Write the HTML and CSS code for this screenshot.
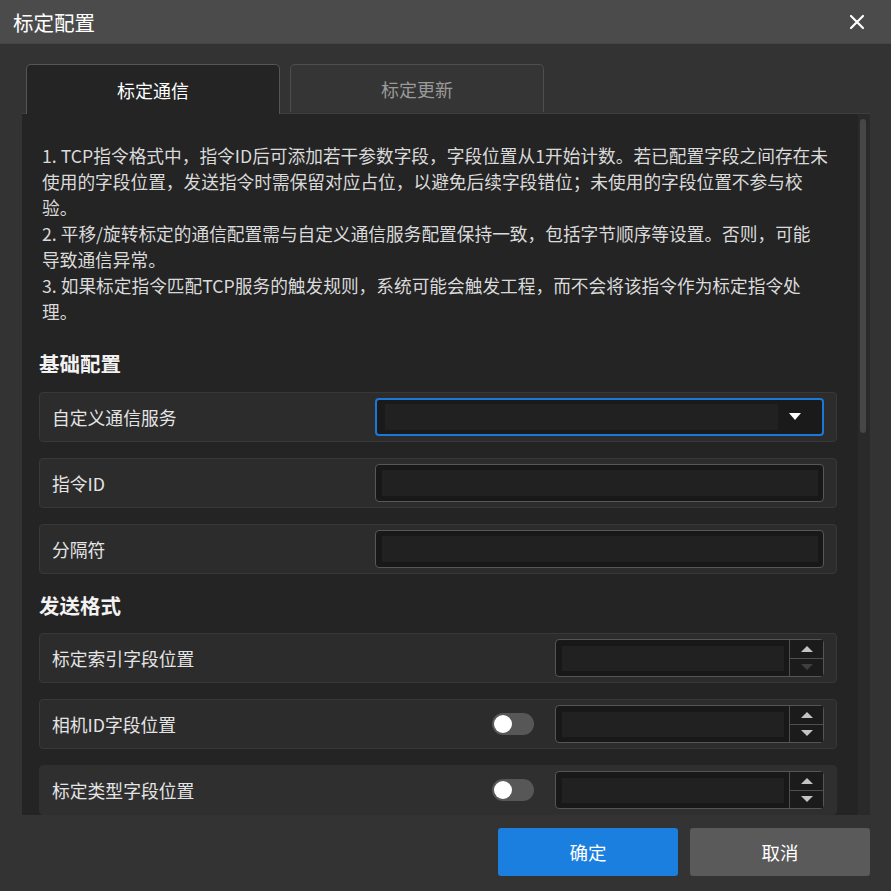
FILE: index.html
```html
<!DOCTYPE html>
<html>
<head>
    <meta charset="utf-8">
    <title>标定配置</title>
    <link rel="stylesheet" href="styles.css">
</head>
<body>
    <div class="dialog">
        <div class="titlebar">
            <span class="title">标定配置</span>
            <svg class="close" width="16" height="16" viewBox="0 0 16 16">
                <path d="M2 2 L14 14 M14 2 L2 14" stroke="#fff" stroke-width="2.2" stroke-linecap="round"/>
            </svg>
        </div>

        <div class="dialog-body">
            <div class="tabs">
                <div class="tab active">标定通信</div>
                <div class="tab">标定更新</div>
            </div>

            <div class="panel">
                <div class="scrollbar"><div class="thumb"></div></div>

                <p class="notes">
                    1. TCP指令格式中，指令ID后可添加若干参数字段，字段位置从1开始计数。若已配置字段之间存在未<br>
                    使用的字段位置，发送指令时需保留对应占位，以避免后续字段错位；未使用的字段位置不参与校<br>
                    验。<br>
                    2. 平移/旋转标定的通信配置需与自定义通信服务配置保持一致，包括字节顺序等设置。否则，可能<br>
                    导致通信异常。<br>
                    3. 如果标定指令匹配TCP服务的触发规则，系统可能会触发工程，而不会将该指令作为标定指令处<br>
                    理。
                </p>

                <h3 class="section first">基础配置</h3>
                <div class="row">
                    <span class="label">自定义通信服务</span>
                    <div class="select">
                        <div class="select-value"></div>
                        <svg class="caret" width="12" height="8" viewBox="0 0 12 8"><path d="M0 0 H12 L6 7 Z" fill="#fff"/></svg>
                    </div>
                </div>
                <div class="row">
                    <span class="label">指令ID</span>
                    <div class="input"></div>
                </div>
                <div class="row">
                    <span class="label">分隔符</span>
                    <div class="input"></div>
                </div>

                <h3 class="section">发送格式</h3>
                <div class="row">
                    <span class="label">标定索引字段位置</span>
                    <div class="spin">
                        <div class="spin-value"></div>
                        <div class="spin-btns">
                            <div class="spin-btn"><i class="up"></i></div>
                            <div class="spin-btn"><i class="down dim"></i></div>
                        </div>
                    </div>
                </div>
                <div class="row">
                    <span class="label">相机ID字段位置</span>
                    <div class="switch"><i></i></div>
                    <div class="spin">
                        <div class="spin-value"></div>
                        <div class="spin-btns">
                            <div class="spin-btn"><i class="up"></i></div>
                            <div class="spin-btn"><i class="down"></i></div>
                        </div>
                    </div>
                </div>
                <div class="row hover">
                    <span class="label">标定类型字段位置</span>
                    <div class="switch"><i></i></div>
                    <div class="spin">
                        <div class="spin-value"></div>
                        <div class="spin-btns">
                            <div class="spin-btn"><i class="up"></i></div>
                            <div class="spin-btn"><i class="down"></i></div>
                        </div>
                    </div>
                </div>
            </div>

            <div class="footer">
                <button class="btn primary">确定</button>
                <button class="btn">取消</button>
            </div>
        </div>
    </div>
</body>
</html>
```

FILE: styles.css
```css
* {
    margin: 0;
    padding: 0;
    box-sizing: border-box;
}

body {
    background: #333;
    font-family: "Noto Sans CJK SC", "Noto Sans", sans-serif;
    color: #e2e2e2;
}

.dialog {
    width: 891px;
    height: 891px;
    background: #333;
}

.titlebar {
    height: 44px;
    background: #4b4b4b;
    display: flex;
    align-items: center;
    justify-content: space-between;
    padding: 0 26px 0 13px;
    border-bottom: 1px solid #444;
}

.titlebar .title {
    font-size: 20.5px;
    color: #fff;
}

.dialog-body {
    padding: 20px 21px 0 22px;
}

.tabs {
    display: flex;
    gap: 10px;
    padding-left: 4px;
    height: 49px;
}

.tab {
    width: 254px;
    height: 48px;
    border: 1px solid #4e4e4e;
    border-bottom: none;
    border-radius: 5px 5px 0 0;
    background: #353535;
    color: #9a9a9a;
    font-size: 18px;
    display: flex;
    align-items: center;
    justify-content: center;
}

.tab.active {
    height: 50px;
    background: #242424;
    color: #fff;
    border-color: #555;
    position: relative;
    z-index: 1;
}

.panel {
    position: relative;
    height: 702px;
    background: #242424;
    border-top: 1px solid #3e3e3e;
    padding: 28px 33px 0 17px;
    overflow: hidden;
}

.scrollbar {
    position: absolute;
    top: 0;
    right: 0;
    width: 12px;
    height: 100%;
    background: #2a2a2a;
}

.scrollbar .thumb {
    margin: 5px 0 0 2px;
    width: 6px;
    height: 314px;
    border-radius: 3px;
    background: #474747;
}

.notes {
    padding-left: 3px;
    font-size: 17.7px;
    line-height: 26px;
    color: #dadada;
    white-space: nowrap;
}

.section {
    font-size: 20.5px;
    font-weight: bold;
    line-height: 26px;
    color: #f2f2f2;
    margin: 18px 0 15px;
}

.section.first {
    margin-top: 26px;
    margin-bottom: 16px;
}

.row {
    height: 50px;
    margin-bottom: 16px;
    background: #2c2c2c;
    border: 1px solid #383838;
    border-radius: 4px;
    display: flex;
    align-items: center;
    padding: 0 12px;
}

.row.hover {
    background: #2f2f2f;
    border-color: #2f2f2f;
}

.row .label {
    flex: 1;
    font-size: 17.8px;
    color: #e4e4e4;
}

.select {
    width: 449px;
    height: 38px;
    border: 2px solid #1c78d8;
    border-radius: 4px;
    background: #1a1a1a;
    display: flex;
    align-items: center;
    padding: 0 8px;
}

.select-value {
    width: 393px;
    height: 26px;
    background: #212121;
}

.select .caret {
    margin-left: 11px;
}

.input {
    width: 449px;
    height: 38px;
    border: 1px solid #575757;
    border-radius: 4px;
    background: #181818;
    padding: 5px 5px 5px 6px;
}

.input::after {
    content: "";
    display: block;
    height: 100%;
    background: #212121;
}

.switch {
    width: 42px;
    height: 22px;
    border-radius: 11px;
    background: #575757;
    margin-right: 21px;
    padding: 2px;
}

.switch i {
    display: block;
    width: 18px;
    height: 18px;
    border-radius: 50%;
    background: #fff;
}

.spin {
    width: 269px;
    height: 38px;
    border: 1px solid #555;
    border-radius: 4px;
    background: #181818;
    display: flex;
}

.spin-value {
    flex: 1;
    margin: 6px 5px 5px 6px;
    background: #212121;
}

.spin-btns {
    width: 34px;
    border-left: 1px solid #4e4e4e;
    display: flex;
    flex-direction: column;
}

.spin-btn {
    flex: 1;
    display: flex;
    align-items: center;
    justify-content: center;
    background: #1b1b1b;
}

.spin-btn + .spin-btn {
    border-top: 1px solid #4e4e4e;
}

.spin-btn i {
    width: 0;
    height: 0;
    border-left: 6px solid transparent;
    border-right: 6px solid transparent;
}

.spin-btn .up {
    border-bottom: 6px solid #c4c4c4;
}

.spin-btn .down {
    border-top: 6px solid #c4c4c4;
}

.spin-btn .down.dim {
    border-top-color: #3e3e3e;
}

.footer {
    display: flex;
    justify-content: flex-end;
    gap: 12px;
    padding-top: 13px;
}

.btn {
    width: 180px;
    height: 48px;
    border: none;
    border-radius: 3px;
    font-family: inherit;
    font-size: 18.5px;
    color: #fff;
    background: #5a5a5a;
}

.btn.primary {
    background: #1b7fdf;
}
```
